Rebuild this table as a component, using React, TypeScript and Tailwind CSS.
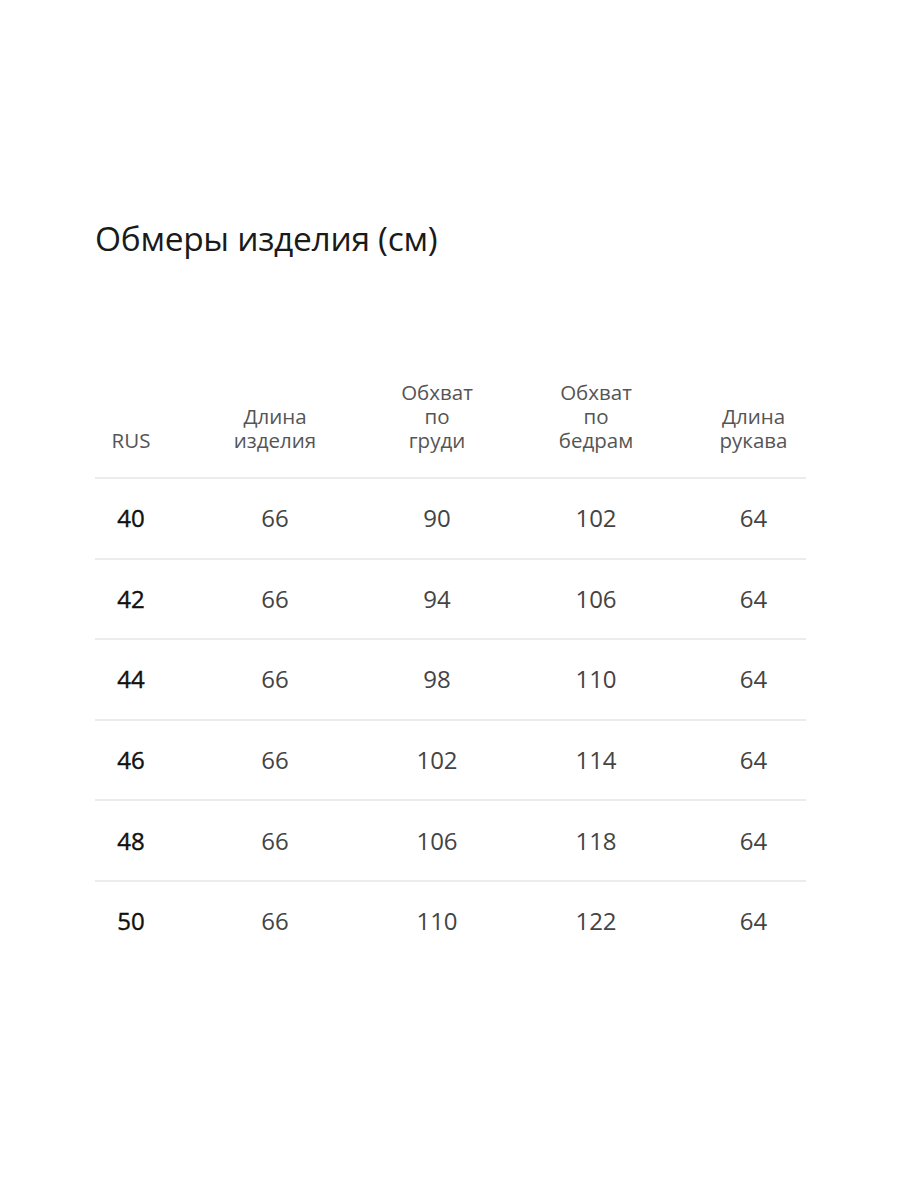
const header = [
  ["RUS"],
  ["Длина", "изделия"],
  ["Обхват", "по", "груди"],
  ["Обхват", "по", "бедрам"],
  ["Длина", "рукава"],
]

const rows = [
  ["40", "66", "90", "102", "64"],
  ["42", "66", "94", "106", "64"],
  ["44", "66", "98", "110", "64"],
  ["46", "66", "102", "114", "64"],
  ["48", "66", "106", "118", "64"],
  ["50", "66", "110", "122", "64"],
]

const cols = "grid grid-cols-[72px_216px_108px_210px_105px]"

export default function App() {
  return (
    <div className="w-[900px] h-[1200px] bg-white font-['Open_Sans',sans-serif]">
      <div className="pl-[95px] pt-[214px] w-[806px]">
        <h1 className="text-[33.5px] leading-[48px] text-[#1a1a1a] tracking-[-0.3px]">
          Обмеры изделия (см)
        </h1>

        {/* Header */}
        <div className={`${cols} mt-[118px] pb-[25px] items-end`}>
          {header.map((lines, i) => (
            <div key={i} className="text-center text-[20.5px] leading-[24px] text-[#555]">
              {lines.map((l) => (
                <div key={l}>{l}</div>
              ))}
            </div>
          ))}
        </div>

        {/* Rows */}
        {rows.map((r) => (
          <div key={r[0]} className={`${cols} border-t-2 border-[#ececec] h-[80.6px] items-center`}>
            {r.map((v, i) => (
              <div
                key={i}
                className={
                  i === 0
                    ? "text-center text-[24px] text-[#111] [-webkit-text-stroke:0.4px_#111]"
                    : "text-center text-[24px] text-[#444]"
                }
              >
                {v}
              </div>
            ))}
          </div>
        ))}
      </div>
    </div>
  )
}
